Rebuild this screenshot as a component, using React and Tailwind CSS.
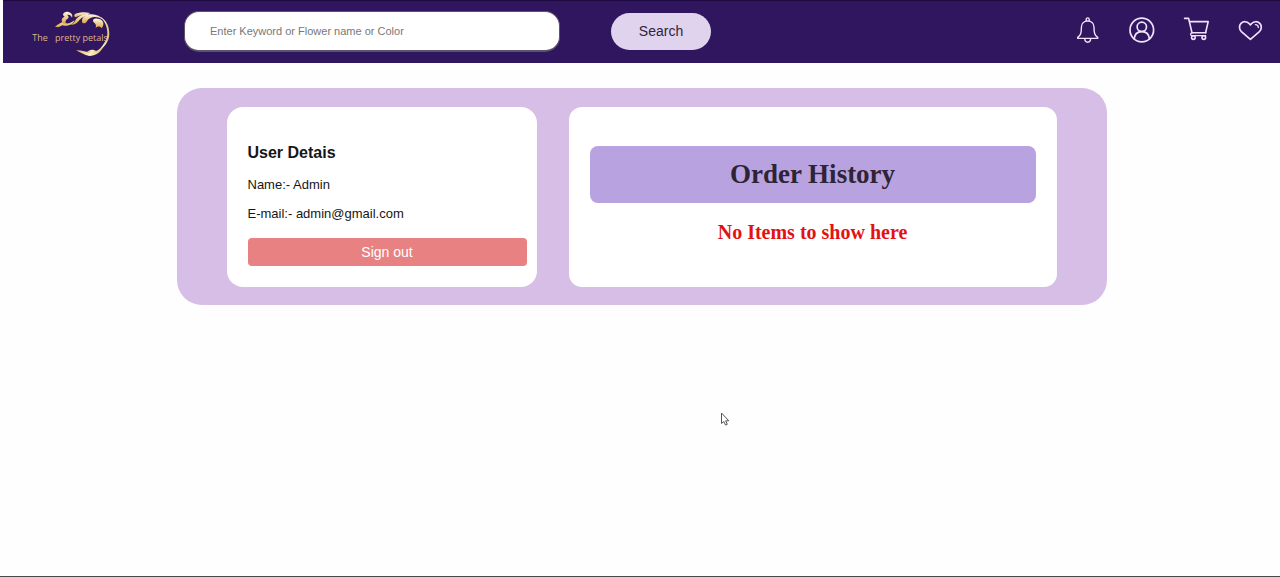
function Logo() {
  return (
    <svg viewBox="21 3 240 150" className="h-[50px] w-20" role="img" aria-label="The pretty petals">
      <defs>
        <linearGradient id="petal" x1="0" y1="0" x2="0" y2="1">
          <stop offset="0" stopColor="#fdf6e3" />
          <stop offset="1" stopColor="#dda53c" />
        </linearGradient>
        <linearGradient id="stem" x1="0" y1="0" x2="1" y2="0">
          <stop offset="0" stopColor="#e0b04c" />
          <stop offset="0.5" stopColor="#fbefd0" />
          <stop offset="1" stopColor="#e3bd78" />
        </linearGradient>
      </defs>
      <g fill="url(#petal)">
        <path d="M89 64C98 62 102 54 114 52C124 58 138 56 148 46C144 58 130 66 112 61C104 67 96 68 89 64Z" />
        <path d="M115 56C107 47 110 38 119 35C110 30 115 21 125 20C136 20 145 27 141 38C138 31 132 28 127 30C133 35 131 41 126 43C121 46 121 51 123 57Z" />
        <path d="M135 58C150 57 149 44 159 37C169 29 181 25 195 26C182 33 171 36 164 44C156 54 149 62 135 58Z" />
        <path d="M152 37C144 34 148 26 157 25C169 20 181 21 195 24C182 31 167 29 152 37Z" />
        <path d="M172 53C168 40 178 31 194 28C210 26 226 32 237 46C224 37 212 34 203 37C192 40 189 44 185 50C182 55 176 56 172 53Z" />
        <path d="M230 70C225 62 218 64 212 68C215 60 211 56 206 52C201 45 207 40 217 41C232 42 242 53 230 70Z" />
      </g>
      <g fill="url(#stem)">
        <path d="M223 34C243 44 253 62 253 86C253 110 237 130 214 142C232 125 247 107 247 85C247 63 238 46 223 34Z" />
        <path d="M153 136C170 135 182 142 199 143C211 141 222 135 236 124C226 144 212 152 193 153C177 151 167 142 153 136Z" />
        <path d="M185 142C193 132 206 132 216 139C206 145 195 147 185 142Z" />
      </g>
      <g fill="#deb48c" fontFamily='"Open Sans", "Noto Sans", sans-serif' fontSize="27">
        <text x="22" y="107">The</text>
        <text x="90" y="107">pretty petals</text>
      </g>
    </svg>
  );
}

function BellIcon() {
  return (
    <svg viewBox="0 0 28 28" className="size-7" fill="none" stroke="currentColor" strokeWidth="1.4" strokeLinecap="round" strokeLinejoin="round" aria-hidden="true">
      <path d="M12.2 3.6V2.4a1.5 1.5 0 0 1 3 0v1.2" />
      <path d="M13.7 4C10 4 7.400 6.600 7.400 10.200c0 6-.7 7.800-3.700 10.200v1h20v-1c-3-2.400-3.700-4.200-3.700-10.200C20 6.600 17.400 4 13.700 4Z" />
      <path d="M10.800 21.600a2.900 3.600 0 0 0 5.800 0" />
    </svg>
  );
}

function UserIcon() {
  return (
    <svg viewBox="0 0 28 28" className="size-7" fill="none" stroke="currentColor" strokeWidth="1.7" strokeLinecap="round" aria-hidden="true">
      <circle cx="13.8" cy="13" r="11.8" />
      <circle cx="13.8" cy="9.8" r="4.7" />
      <path d="M6.200 22c.3-4.400 3.100-7.400 7.600-7.400s7.300 3 7.600 7.400" />
    </svg>
  );
}

function CartIcon() {
  return (
    <svg viewBox="0 0 28 28" className="size-7" fill="none" stroke="currentColor" strokeWidth="1.6" strokeLinecap="round" strokeLinejoin="round" aria-hidden="true">
      <path d="M2.600 1.400h4l3.400 14.400h13.800" />
      <path d="M7.600 4.600h18.600l-2.600 11.200" />
      <path d="M10.200 15.800c-2.200.2-2.200 2.800 0 2.800h13.600" strokeWidth="1.2" />
      <circle cx="11.4" cy="20.6" r="1.8" />
      <circle cx="21.8" cy="20.6" r="1.8" />
    </svg>
  );
}

function HeartIcon() {
  return (
    <svg viewBox="0 0 28 28" className="size-7" fill="none" stroke="currentColor" strokeWidth="1.7" strokeLinecap="round" strokeLinejoin="round" aria-hidden="true">
      <path d="M14.4 22.4 5.4 14.6C3 12.4 2.9 8.6 5 6.4c2.3-2.3 6-2.2 8.1.1l1.3 1.4 1.3-1.4c2.1-2.3 5.800-2.400 8.100-.1 2.100 2.200 2 6-.4 8.200Z" />
      <path d="M19.400 7.600c1.700 0 2.900 1.200 2.900 2.900" strokeWidth="1.3" />
    </svg>
  );
}

const links = [
  { label: "Notifications", Icon: BellIcon },
  { label: "Account", Icon: UserIcon },
  { label: "Cart", Icon: CartIcon },
  { label: "Wishlist", Icon: HeartIcon },
];

export default function App() {
  return (
    <div className="relative flex min-h-screen flex-col border-b border-[#4a484b] bg-[#fefefe] pl-[3px] font-['Liberation_Sans',Arial,sans-serif] text-sm text-[#161616]">
      <header className="flex items-center border-t border-[#1e0a40] bg-[#30155f] pt-[5px] pr-4 pb-[7px] pl-[29px] text-[#efe3fa]">
        <a href="#home" className="shrink-0">
          <Logo />
        </a>
        <form className="ml-[72px] flex flex-1 items-center gap-[51px]" onSubmit={(e) => e.preventDefault()}>
          <input
            type="search"
            aria-label="Search flowers"
            placeholder="Enter Keyword or Flower name or Color"
            className="h-[41px] w-full max-w-[376px] rounded-[15px] border border-b-2 border-[#5b5368] bg-white px-[25px] text-[11px] text-[#222222] placeholder:text-[#777777]"
          />
          <button type="submit" className="h-[37px] w-[100px] shrink-0 rounded-full bg-[#e0d3ee] text-sm text-[#30243c]">
            Search
          </button>
        </form>
        <nav className="flex shrink-0 items-center gap-[26px]">
          {links.map(({ label, Icon }) => (
            <a key={label} href={"#" + label.toLowerCase()} aria-label={label}>
              <Icon />
            </a>
          ))}
        </nav>
      </header>

      <main className="mx-auto mt-[25px] grid w-full max-w-[930px] grid-cols-[310fr_488fr] gap-8 rounded-[25px] bg-[#d6bee6] px-[50px] pt-[19px] pb-[18px]">
        <section className="flex flex-col rounded-[16px] bg-white pt-9 pr-[10px] pb-[21px] pl-[21px]">
          <h2 className="text-base leading-5 font-bold">User Detais</h2>
          <p className="mt-3 text-[13px] leading-5">Name:- Admin</p>
          <p className="mt-[9px] text-[13px] leading-5">E-mail:- admin@gmail.com</p>
          <button type="button" className="mt-[14px] h-7 rounded-[4px] bg-[#e78182] text-sm text-white">
            Sign out
          </button>
        </section>
        <section className="rounded-[13px] bg-white px-[21px] pt-[39px] text-center font-['Liberation_Serif','Times_New_Roman',serif] font-bold">
          <h1 className="rounded-[8px] bg-[#b9a2e0] py-3 text-[27px] leading-[33px] text-[#2d2436]">Order History</h1>
          <p className="mt-[17px] text-xl leading-6 text-[#e31212]">No Items to show here</p>
        </section>
      </main>

      <svg viewBox="0 0 10 14" className="pointer-events-none absolute top-[412px] left-[720px] h-[14px] w-[10px]" aria-hidden="true">
        <path d="M1.5 1v10.5l2.4-2 1.6 3.6 1.8-.8-1.6-3.5h3.1Z" fill="#ffffff" stroke="#555555" strokeWidth="1" />
      </svg>
    </div>
  );
}
